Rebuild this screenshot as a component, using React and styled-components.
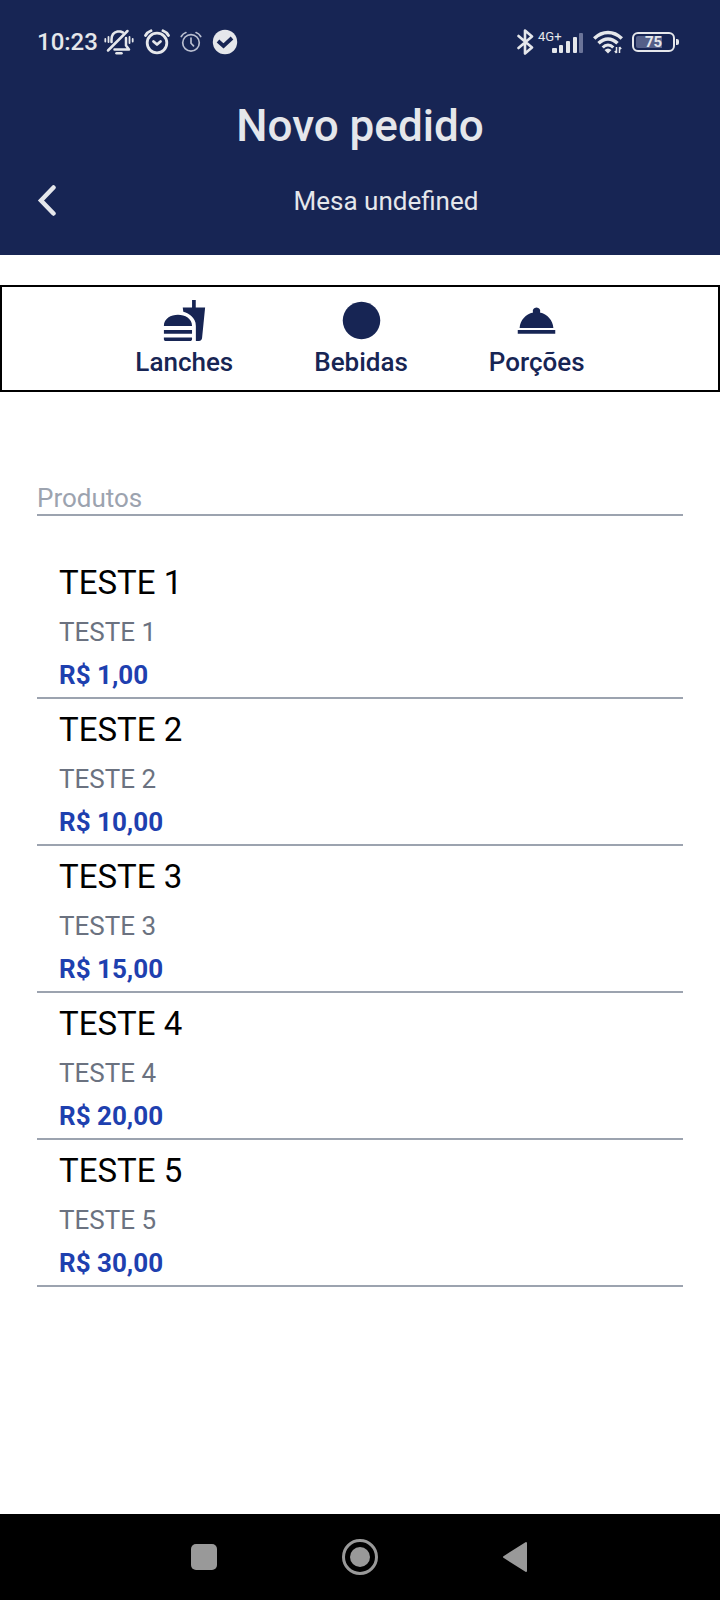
import React from "react";
import styled, { createGlobalStyle } from "styled-components";
import { MdCircle, MdFastfood, MdRoomService } from "react-icons/md";

const GlobalStyle = createGlobalStyle`
  * { box-sizing: border-box; }
  body {
    margin: 0;
    background: #fff;
    font-family: Roboto, "Noto Sans", sans-serif;
    font-size: 26px;
    line-height: 38px;
  }
  button { border: 0; padding: 0; background: none; font: inherit; color: inherit; cursor: pointer; }
  svg { display: block; flex: none; }
`;

const Screen = styled.div`
  display: flex;
  flex-direction: column;
  min-height: 100vh;
`;

const Header = styled.header`
  background: #172554;
  color: #e5e7eb;
  padding: 0 37px 28px;
`;

const StatusBar = styled.div`
  display: flex;
  justify-content: space-between;
  align-items: center;
  height: 84px;
  padding-right: 4px;
`;

const StatusGroup = styled.div`
  display: flex;
  align-items: center;
  gap: ${(p) => p.$gap}px;
`;

const Clock = styled.span`
  font-size: 24px;
  font-weight: 500;
  margin-right: -4px;
`;

const Signal = styled.div`
  position: relative;
  width: 46px;
  height: 24px;
  margin-left: -5px;
  display: flex;
  justify-content: flex-end;
`;

const NetworkType = styled.span`
  position: absolute;
  left: 0;
  top: 0;
  font-size: 13px;
  line-height: 14px;
`;

const Battery = styled.div`
  display: flex;
  align-items: center;
  gap: 1px;
  &::after {
    content: "";
    width: 3px;
    height: 6px;
    border-radius: 0 2px 2px 0;
    background: #e5e7eb;
  }
`;

const BatteryBody = styled.span`
  width: 43px;
  height: 20px;
  border: 2px solid #e5e7eb;
  border-radius: 6px;
  background: linear-gradient(to right, #545f88 75%, transparent 75%) content-box;
  padding: 2px;
  font-size: 15px;
  line-height: 13px;
  font-weight: 700;
  text-align: center;
`;

const Title = styled.h1`
  margin: 12px 0 19px;
  font-size: 44px;
  line-height: 60px;
  font-weight: 500;
  text-align: center;
`;

const TableRow = styled.div`
  display: flex;
  align-items: center;
`;

const BackButton = styled.button`
  width: 52px;
  height: 52px;
  display: flex;
  align-items: center;
`;

const TableName = styled.p`
  flex: 1;
  margin: 0;
  text-align: center;
`;

const Categories = styled.nav`
  display: flex;
  justify-content: center;
  gap: 81px;
  margin-top: 30px;
  padding: 11px 0 9px;
  border: 2px solid #000;
`;

const CategoryButton = styled.button`
  display: flex;
  flex-direction: column;
  align-items: center;
  color: #172554;
  font-weight: 500;
`;

const Content = styled.main`
  flex: 1;
  padding: 90px 37px 40px;
`;

const SearchInput = styled.input`
  display: block;
  width: 100%;
  height: 34px;
  padding: 0;
  border: 0;
  border-bottom: 2px solid #9ca3af;
  border-radius: 0;
  outline: 0;
  background: none;
  font: inherit;
  line-height: 32px;
  &::placeholder { color: #9ca3af; opacity: 1; }
`;

const ProductList = styled.ul`
  list-style: none;
  margin: 36px 0 0;
  padding: 0;
`;

const Product = styled.li`
  display: flex;
  flex-direction: column;
  gap: 5px;
  padding: 6px 22px 3px;
  border-bottom: 2px solid #9ca3af;
`;

const ProductName = styled.h2`
  margin: 0;
  font-size: 33px;
  line-height: 50px;
  font-weight: 400;
  color: #000;
`;

const ProductDescription = styled.p`
  margin: 0;
  color: #6b7280;
`;

const ProductPrice = styled.strong`
  font-weight: 700;
  color: #1e40af;
`;

const SystemNav = styled.footer`
  display: flex;
  height: 86px;
  padding: 0 127px 0 126px;
  background: #000;
`;

const SystemButton = styled.button`
  flex: 1;
  display: flex;
  align-items: center;
  justify-content: center;
`;

const MutedBell = () => (
  <svg width="30" height="26" viewBox="0 0 30 26" fill="none" stroke="#e5e7eb" strokeWidth="2.5" strokeLinecap="round" strokeLinejoin="round">
    <path d="M7.500 13V10.500C7.500 6 10 3.300 13.500 2.500H16.500L19 3.500M22 9V16.500L25 20.500H10.500" />
    <path d="M4 21.500L23.500 2" />
    <path d="M12.500 24.300H17.500" strokeWidth="2.500" />
    <path d="M4.500 8V13M1.300 10V12.500M25.500 8V14M28.700 10V12.500" strokeWidth="1.800" />
  </svg>
);

const AlarmClock = ({ size, stroke, hands, color = "#e5e7eb" }) => (
  <svg width={size} height={size} viewBox="0 0 26 26" fill="none" stroke={color} strokeWidth={stroke} strokeLinecap="round" strokeLinejoin="round">
    <circle cx="13" cy="14" r="9.800" />
    <path d={hands} />
    <path d="M1.500 6.500Q3.500 3 7 1.800M24.500 6.500Q22.500 3 19 1.800" />
  </svg>
);

const CheckBadge = () => (
  <svg width="26" height="26" viewBox="0 0 26 26">
    <circle cx="13" cy="13" r="12.200" fill="#e5e7eb" />
    <path d="M6 12L11.500 17L20 9" fill="none" stroke="#172554" strokeWidth="3.800" />
  </svg>
);

const Bluetooth = () => (
  <svg width="19" height="26" viewBox="0 0 19 26" fill="none" stroke="#e5e7eb" strokeWidth="2.600" strokeLinejoin="round" strokeLinecap="round">
    <path d="M3.500 7L17 18.500L10 24.500V1.500L17 7.500L3.500 19" />
  </svg>
);

const SignalBars = () => (
  <svg width="33" height="24" viewBox="0 0 33 24" fill="#e5e7eb">
    <rect x="1" y="18" width="5" height="5" rx="1" />
    <rect x="8" y="15" width="4" height="8" rx="1" />
    <rect x="15" y="11" width="4" height="12" rx="1" />
    <rect x="22" y="7" width="4" height="16" rx="1" />
    <rect x="28" y="3" width="4" height="20" rx="1" fill="#6b7499" />
  </svg>
);

const Wifi = () => (
  <svg width="30" height="24" viewBox="0 0 30 24" fill="none" stroke="#e5e7eb" strokeWidth="3.500">
    <path d="M1.200 8.500Q7.500 2.500 15 2.500T28.800 8.500" />
    <path d="M5.500 13.300Q10 9 15 9T24.500 13.300" />
    <path d="M9.700 17.500Q12 15 15 15T20.300 17.500" strokeWidth="3" />
    <path d="M11.500 20Q15 17 18.500 20L15 23.500Z" fill="#e5e7eb" stroke="none" />
    <path d="M23.500 17V23M26.500 17V23M21.800 21L23.500 23M28.200 19L26.500 17" strokeWidth="1.500" />
  </svg>
);

const CATEGORIES = [
  { name: "Lanches", Icon: MdFastfood },
  { name: "Bebidas", Icon: MdCircle },
  { name: "Porções", Icon: MdRoomService },
];

const PRODUCTS = [
  { name: "TESTE 1", price: "R$ 1,00" },
  { name: "TESTE 2", price: "R$ 10,00" },
  { name: "TESTE 3", price: "R$ 15,00" },
  { name: "TESTE 4", price: "R$ 20,00" },
  { name: "TESTE 5", price: "R$ 30,00" },
];

export default function App() {
  return (
    <Screen>
      <GlobalStyle />
      <Header>
        <StatusBar>
          <StatusGroup $gap={10}>
            <Clock>10:23</Clock>
            <MutedBell />
            <AlarmClock size={26} stroke={2.8} hands="M9.500 12.500L13 15.500L16.500 12.500" />
            <AlarmClock size={22} stroke={2} hands="M13 8.500V14.500L16 17.500" color="#b9bed0" />
            <CheckBadge />
          </StatusGroup>
          <StatusGroup $gap={9}>
            <Bluetooth />
            <Signal>
              <NetworkType>4G+</NetworkType>
              <SignalBars />
            </Signal>
            <Wifi />
            <Battery>
              <BatteryBody>75</BatteryBody>
            </Battery>
          </StatusGroup>
        </StatusBar>
        <Title>Novo pedido</Title>
        <TableRow>
          <BackButton aria-label="Voltar">
            <svg width="20" height="32" viewBox="0 0 20 32" fill="none" stroke="#e5e7eb" strokeWidth="4.500" strokeLinecap="round">
              <path d="M16.500 2.500L4 15.500L16.500 28.500" />
            </svg>
          </BackButton>
          <TableName>Mesa undefined</TableName>
        </TableRow>
      </Header>
      <Categories>
        {CATEGORIES.map(({ name, Icon }) => (
          <CategoryButton key={name}>
            <Icon size={45} />
            {name}
          </CategoryButton>
        ))}
      </Categories>
      <Content>
        <SearchInput type="text" placeholder="Produtos" aria-label="Produtos" />
        <ProductList>
          {PRODUCTS.map(({ name, price }) => (
            <Product key={name}>
              <ProductName>{name}</ProductName>
              <ProductDescription>{name}</ProductDescription>
              <ProductPrice>{price}</ProductPrice>
            </Product>
          ))}
        </ProductList>
      </Content>
      <SystemNav>
        <SystemButton aria-label="Recentes">
          <svg width="26" height="26"><rect width="26" height="26" rx="5" fill="#999" /></svg>
        </SystemButton>
        <SystemButton aria-label="Início">
          <svg width="36" height="36">
            <circle cx="18" cy="18" r="16.500" fill="none" stroke="#999" strokeWidth="3" />
            <circle cx="18" cy="18" r="10" fill="#999" />
          </svg>
        </SystemButton>
        <SystemButton aria-label="Voltar ao anterior">
          <svg width="26" height="32"><path d="M24 2V30L2 16Z" fill="#999" stroke="#999" strokeWidth="2" strokeLinejoin="round" /></svg>
        </SystemButton>
      </SystemNav>
    </Screen>
  );
}
